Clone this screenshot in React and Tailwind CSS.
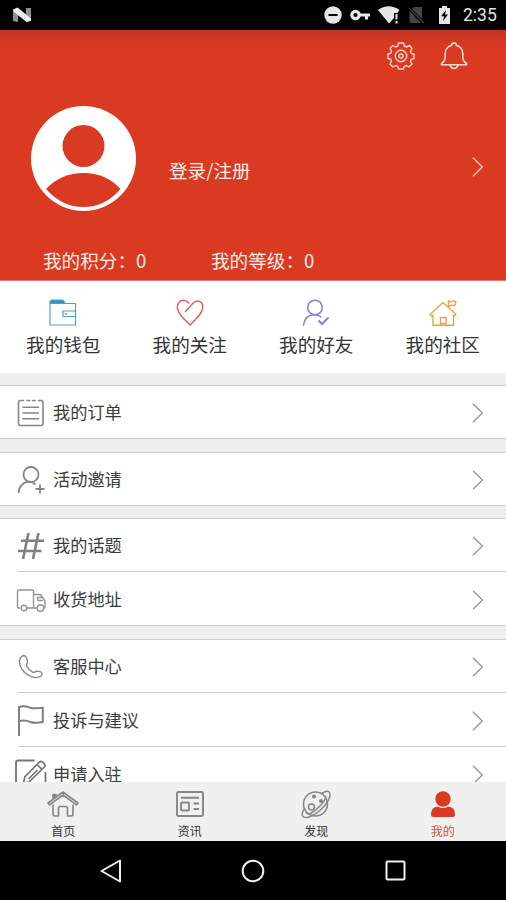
import React from 'react';

const RED = '#DB3A22';

const icons = {
  wallet: (
    <svg width="28" height="28" viewBox="0 0 28 28" fill="none" stroke="#4FA3C9" strokeWidth="1.2">
      <path d="M1 5V3.2Q1 1 3.2 1H13Q15 1 16 4.5H1Z" fill="#3592BE" />
      <path d="M1 4.5H26.5V26H1ZM26.5 12H14V17.5H26.5M15.5 14.8H18" />
    </svg>
  ),
  heart: (
    <svg width="28" height="28" viewBox="0 0 28 28" fill="none" stroke="#E0605C" strokeWidth="1.5" strokeLinecap="round" strokeLinejoin="round">
      <path d="M9.5 12.5L17 4.3Q19 1.6 22 2C25.5 2.5 27 5.5 26.7 9C26.3 14 21 19 14.2 26C7 19 1.5 14 1.3 8.5C1.2 4.5 4 1.3 7.5 1.3Q10.5 1.3 12.8 4" />
    </svg>
  ),
  friend: (
    <svg width="28" height="28" viewBox="0 0 28 28" fill="none" stroke="#8981DC" strokeWidth="1.6" strokeLinecap="round">
      <circle cx="13" cy="8.5" r="7.3" />
      <path d="M1.5 26C2.5 19 7 15.7 12.5 15.7Q16.5 15.7 19 18" />
      <path d="M17 22L20 25L26 19" strokeWidth="2.1" />
    </svg>
  ),
  community: (
    <svg width="28" height="28" viewBox="0 0 28 28" fill="none" stroke="#E9A640" strokeWidth="1.4" strokeLinejoin="round">
      <path d="M1 15.5L14 3.5L27 15.5L25.5 17L24.5 16V26.3H4V16L2.5 17Z" />
      <path d="M11.5 26V18.5H17V26M19.5 8V1.7Q21.5 3.5 23.5 2.2H27L26 6.5Q23 5.8 19.5 7.5" />
      <path d="M11.5 24.5H17" />
    </svg>
  ),
  order: (
    <svg width="28" height="28" viewBox="0 0 28 28" fill="none" stroke="#858585" strokeWidth="1.6" strokeLinecap="round">
      <path d="M6.5 1.5H3.5Q1.5 1.5 1.5 3.5V24.5Q1.5 26.5 3.5 26.5H24Q26 26.5 26 24.5V3.5Q26 1.5 24 1.5H21.5M10 1.5H12.5M15.5 1.5H18" />
      <path d="M6 8.2H21.5M6 14H21.5M6 19.8H21.5" />
    </svg>
  ),
  invite: (
    <svg width="28" height="28" viewBox="0 0 28 28" fill="none" stroke="#858585" strokeWidth="1.8">
      <circle cx="14" cy="8.5" r="7.5" />
      <path d="M1.5 27C2 20 6.5 15.9 12 15.7Q16 16 18.5 18.7M23 18.5V27.5M18.5 23H27.5" />
    </svg>
  ),
  topic: (
    <svg width="28" height="28" viewBox="0 0 28 28" fill="none" stroke="#808080" strokeWidth="2.6">
      <path d="M11.5 1L6 27M21.5 1L16 27M4 8.8H27M1 19H24.5" />
    </svg>
  ),
  address: (
    <svg width="30" height="28" viewBox="0 0 30 28" fill="none" stroke="#949494" strokeWidth="1.4">
      <path d="M4.5 22H2.5Q1.5 22 1.5 21V5.5Q1.5 4 3 4H16Q17.5 4 17.5 5.5V22H11M17.5 8.5H23.5Q25 8.5 26 10.5L29 15V20.5Q29 22 28 22M21.5 22H17.5M27 14.5H22.5Q21.5 14.5 21.5 13.5V11.5H26" />
      <circle cx="8" cy="22" r="2.8" />
      <circle cx="24.5" cy="22" r="3.2" />
    </svg>
  ),
  service: (
    <svg width="28" height="28" viewBox="0 0 28 28" fill="none" stroke="#8A8A8A" strokeWidth="1.4" strokeLinejoin="round" strokeLinecap="round">
      <path d="M17.5 24.5C20 25 25 23.5 25 21.5C26 18.5 20.5 17.8 18.5 18.5Q17.2 20 15.5 19.2Q12 17 9.5 12.8Q9.2 11.5 10.3 10.2C11 7.5 9.5 3 7 2.5C4.5 2.5 2 6 2.5 9C3 16 9 23 17.5 24.5Z" />
    </svg>
  ),
  feedback: (
    <svg width="28" height="32" viewBox="0 0 28 32" fill="none" stroke="#808080" strokeWidth="2">
      <path d="M2 31V1M2 2C7 0 10 1.5 14 3C18 4 21 2.8 25.8 2.8V17C21 17.5 18 18.8 13.5 17C10 15.5 7 14.5 2 16.2" />
    </svg>
  ),
  apply: (
    <svg width="32" height="32" viewBox="0 0 32 32" fill="none" stroke="#757575" strokeWidth="1.8">
      <path d="M19.5 1.5H3Q1 1.5 1 3.5V30H30.5V13" />
      <path d="M8.5 24L9.8 18L24.5 3Q26 1.8 27.5 3L29.5 5Q30.7 6.5 29.3 8L14 23ZM22 5.5L26.7 10.2M13.5 20L22.5 11" strokeWidth="1.7" />
    </svg>
  ),
};

const SHORTCUTS = [
  { label: '我的钱包', icon: 'wallet' },
  { label: '我的关注', icon: 'heart' },
  { label: '我的好友', icon: 'friend' },
  { label: '我的社区', icon: 'community' },
];

const GROUPS = [
  { gap: 'mt-[12px]', items: [{ label: '我的订单', icon: 'order' }] },
  { gap: 'mt-[13px]', items: [{ label: '活动邀请', icon: 'invite' }] },
  {
    gap: 'mt-[12px]',
    items: [
      { label: '我的话题', icon: 'topic' },
      { label: '收货地址', icon: 'address' },
    ],
  },
  {
    gap: 'mt-[13px]',
    items: [
      { label: '客服中心', icon: 'service' },
      { label: '投诉与建议', icon: 'feedback' },
      { label: '申请入驻', icon: 'apply' },
    ],
  },
];

const Chevron = ({ color = '#999' }) => (
  <svg width="12" height="20" viewBox="0 0 12 20" fill="none" stroke={color} strokeWidth="1.4">
    <path d="M1 .8L10.3 10L1 19.2" />
  </svg>
);

const StatusBar = () => (
  <div className="flex h-[30px] shrink-0 items-center bg-black pl-[13px] pr-[9px] text-[#E6E6E6]">
    <svg width="18" height="16" viewBox="0 0 18 16">
      <path d="M0 3L5 1V15L0 14ZM13 1L18 1V14L13 13Z" fill="#8F8F8F" />
      <path d="M0 2.5L4.5 .5L18 11.5V14L13.5 15L1 5Z" fill="#EEE" />
    </svg>
    <div className="ml-auto flex items-center">
      <svg width="18" height="18" viewBox="0 0 18 18">
        <circle cx="9" cy="9" r="8.7" fill="#E6E6E6" />
        <path d="M4.5 9H13.5" stroke="#000" strokeWidth="2" />
      </svg>
      <svg className="ml-[8px]" width="20" height="12" viewBox="0 0 20 12" fill="none" stroke="#E6E6E6">
        <circle cx="5.5" cy="6" r="3.7" strokeWidth="3.2" />
        <path d="M9 6H20M16.5 6V10.5" strokeWidth="3.2" />
      </svg>
      <svg className="ml-[8px]" width="22" height="18" viewBox="0 0 22 18">
        <path d="M0 4Q10.5-3.5 21.5 4L19.5 7H16V12L11 17.5Z" fill="#E6E6E6" />
        <path d="M18.5 8V13.5M18.5 15V17.5" stroke="#E6E6E6" strokeWidth="2" />
      </svg>
      <svg className="ml-[8px]" width="17" height="18" viewBox="0 0 17 18">
        <path d="M6 1H14V13L4 3ZM1.5 5L13 17H3Q1.5 17 1.5 15Z" fill="#454545" />
        <path d="M1 2L16 17" stroke="#454545" strokeWidth="1.2" />
      </svg>
      <svg className="ml-[13px]" width="13" height="18" viewBox="0 0 13 18">
        <path d="M1 2H4V0H9V2H12V18H1Z" fill="#E6E6E6" />
        <path d="M8 4L3 10.3H6L5 15L10 8.5H7Z" fill="#000" />
      </svg>
      <span className="ml-[12px] w-[34px] whitespace-nowrap text-[17.5px] leading-[30px]">2:35</span>
    </div>
  </div>
);

const Header = () => (
  <div
    className="flex h-[251px] shrink-0 flex-col border-b border-[#E08078] bg-[#DB3A22] bg-[linear-gradient(#C23524,#DB3A22_16px)] text-[#FFEDE6]"
    style={{ fontFamily: '"Noto Sans CJK SC", sans-serif' }}
  >
    <div className="flex h-[52px] items-center justify-end gap-[25px] pr-[38px]">
      <svg width="28" height="28" viewBox="0 0 28 28" fill="none" stroke="#FFD5C5" strokeWidth="1.4" strokeLinejoin="round">
        <path d="M11.5 1H16.5L17.3 4L19.5 5L22.5 3.5L25 6.5L23.5 9.3L24.2 11.5L27 12V16.5L24.2 17.3L23.5 19.3L25 22L21.8 25L19.3 23.5L17.2 24.3L16.5 27H11.5L10.8 24.3L8.8 23.5L6 25L3 22L4.5 19.2L3.7 17.2L1 16.5V12L3.7 11.3L4.5 9L3 6.2L6 3.5L8.7 5L10.8 4Z" />
        <circle cx="14" cy="14" r="5.7" />
        <circle cx="14" cy="14" r="2" />
      </svg>
      <svg width="28" height="28" viewBox="0 0 28 28" fill="none" stroke="#FFDDCB" strokeWidth="1.6" strokeLinejoin="round">
        <path d="M11.5 3.5Q11.5 1 14 1T16.5 3.5C20 4.3 22.8 7.5 22.8 11.5V15Q22.8 19 26.5 21.5V22.8H1.5V21.5Q5.2 19 5.2 15V11.5C5.2 7.5 8 4.3 11.5 3.5Z" />
        <path d="M10 23Q11 26.5 14 26.5T18 23" />
      </svg>
    </div>
    <div className="flex h-[152px] items-center pl-[31px] pr-[22px]">
      <svg width="105" height="105" viewBox="0 0 105 105">
        <circle cx="52.5" cy="52.5" r="52.5" fill="#fff" />
        <circle cx="52.5" cy="40" r="21" fill={RED} />
        <path d="M15 83Q30 67 52.5 67T89.5 83Q74 101 52.5 101T15 83Z" fill={RED} />
      </svg>
      <span className="ml-[33px] mt-[23px] text-[18.6px] leading-6">登录/注册</span>
      <span className="ml-auto mt-[18px]">
        <Chevron color="#FFC9B8" />
      </span>
    </div>
    <div className="flex pl-[43px] pt-[14px] text-[18.6px] leading-6">
      <span className="w-[168px]">我的积分：0</span>
      <span>我的等级：0</span>
    </div>
  </div>
);

const Row = ({ item, first }) => (
  <div className={`flex items-center pl-[14px] pr-[22px] pt-[2px] ${first ? 'h-[52px]' : 'h-[53px]'}`}>
    <span className="flex w-[34px] shrink-0 justify-center">{icons[item.icon]}</span>
    <span className="ml-[5px] text-[17.2px] leading-6 text-[#3C3C3C]">{item.label}</span>
    <span className="ml-auto">
      <Chevron />
    </span>
  </div>
);

const TABS = [
  {
    label: '首页',
    icon: (
      <svg width="32" height="28" viewBox="0 0 32 28" fill="none" stroke="#858585" strokeWidth="1.6" strokeLinejoin="round">
        <path d="M1 13L16 2L31 13L29.5 14.8L16 5L2.5 14.8ZM6 14.5V24Q6 26 8 26H11.5V18.5Q11.5 16.5 13.5 16.5H18.5Q20.5 16.5 20.5 18.5V26H24Q26 26 26 24V14.5" />
        <path d="M6 8.5V4.5H9V6.5" fill="#858585" />
      </svg>
    ),
  },
  {
    label: '资讯',
    icon: (
      <svg width="28" height="28" viewBox="0 0 28 28" fill="none" stroke="#858585" strokeWidth="1.9">
        <rect x="1" y="2" width="26" height="24" rx="1.5" />
        <path d="M5 7.8H23M17.5 13.5H23M17.5 19H23" />
        <rect x="5" y="12.5" width="8" height="8" rx="1" />
      </svg>
    ),
  },
  {
    label: '发现',
    icon: (
      <svg width="30" height="30" viewBox="0 0 30 30" fill="none" stroke="#858585" strokeWidth="1.5">
        <circle cx="14.5" cy="15" r="12" />
        <path d="M20.5 4.5Q27 .5 28.5 3.5C30.5 8 25 15.5 20 20.5C14 26.5 5 30.5 2 27.5Q-.5 25 4 19M24.5 7Q25.5 10.5 18 18C12 24 6 27 5 23" />
        <circle cx="10.5" cy="18" r="3" />
        <circle cx="13" cy="7.5" r="1.3" fill="#858585" />
        <circle cx="20" cy="12" r="1.3" fill="#858585" />
      </svg>
    ),
  },
  {
    label: '我的',
    active: true,
    icon: (
      <svg width="26" height="28" viewBox="0 0 26 28" fill={RED}>
        <circle cx="13" cy="9" r="7.7" />
        <path d="M8 16.5Q13 19.5 18 16.5Q25 17 25 24.5Q25 27 22.5 27H3.5Q1 27 1 24.5Q1 17 8 16.5Z" />
      </svg>
    ),
  },
];

const App = () => {
  return (
    <div
      className="flex h-[900px] w-[506px] flex-col overflow-hidden bg-[#EFEFEF]"
      style={{ fontFamily: 'Roboto, "Noto Sans CJK SC", sans-serif' }}
    >
      <StatusBar />
      <Header />
      <div className="grid h-[92px] shrink-0 grid-cols-4 bg-white">
        {SHORTCUTS.map((item) => (
          <div key={item.label} className="flex flex-col items-center pt-[18px]">
            {icons[item.icon]}
            <span className="mt-[7px] text-[18.6px] leading-6 text-[#333]">{item.label}</span>
          </div>
        ))}
      </div>

      <div className="flex min-h-0 flex-1 flex-col overflow-hidden">
        {GROUPS.map(({ gap, items }) => (
          <div key={items[0].label} className={`shrink-0 border-y border-[#CFCFCF] bg-white ${gap}`}>
            {items.map((item, index) => (
              <React.Fragment key={item.label}>
                {index > 0 && <div className="ml-[18px] h-px bg-[#CCC]" />}
                <Row item={item} first={index === 0} />
              </React.Fragment>
            ))}
          </div>
        ))}
      </div>

      <div className="grid h-[59px] shrink-0 grid-cols-4 bg-[#F0F0F0]">
        {TABS.map((tab) => (
          <div key={tab.label} className="flex flex-col items-center pt-[7px]">
            <span className="flex h-[30px] items-center">{tab.icon}</span>
            <span className={`mt-[4px] text-[12px] leading-[18px] ${tab.active ? 'text-[#DF4A3B]' : 'text-[#333]'}`}>
              {tab.label}
            </span>
          </div>
        ))}
      </div>

      <div className="flex h-[59px] shrink-0 items-center justify-center gap-[120px] bg-black">
        <svg width="22" height="24" viewBox="0 0 22 24" fill="none" stroke="#F0F0F0" strokeWidth="2" strokeLinejoin="round">
          <path d="M2.5 12L21 1.5V22.5Z" />
        </svg>
        <svg width="24" height="24" viewBox="0 0 24 24" fill="none" stroke="#F0F0F0" strokeWidth="2">
          <circle cx="12" cy="12" r="10.3" />
        </svg>
        <svg width="22" height="24" viewBox="0 0 22 24" fill="none" stroke="#F0F0F0" strokeWidth="2">
          <rect x="1.5" y="2.5" width="18" height="18" rx="1" />
        </svg>
      </div>
    </div>
  );
};

export default App;
